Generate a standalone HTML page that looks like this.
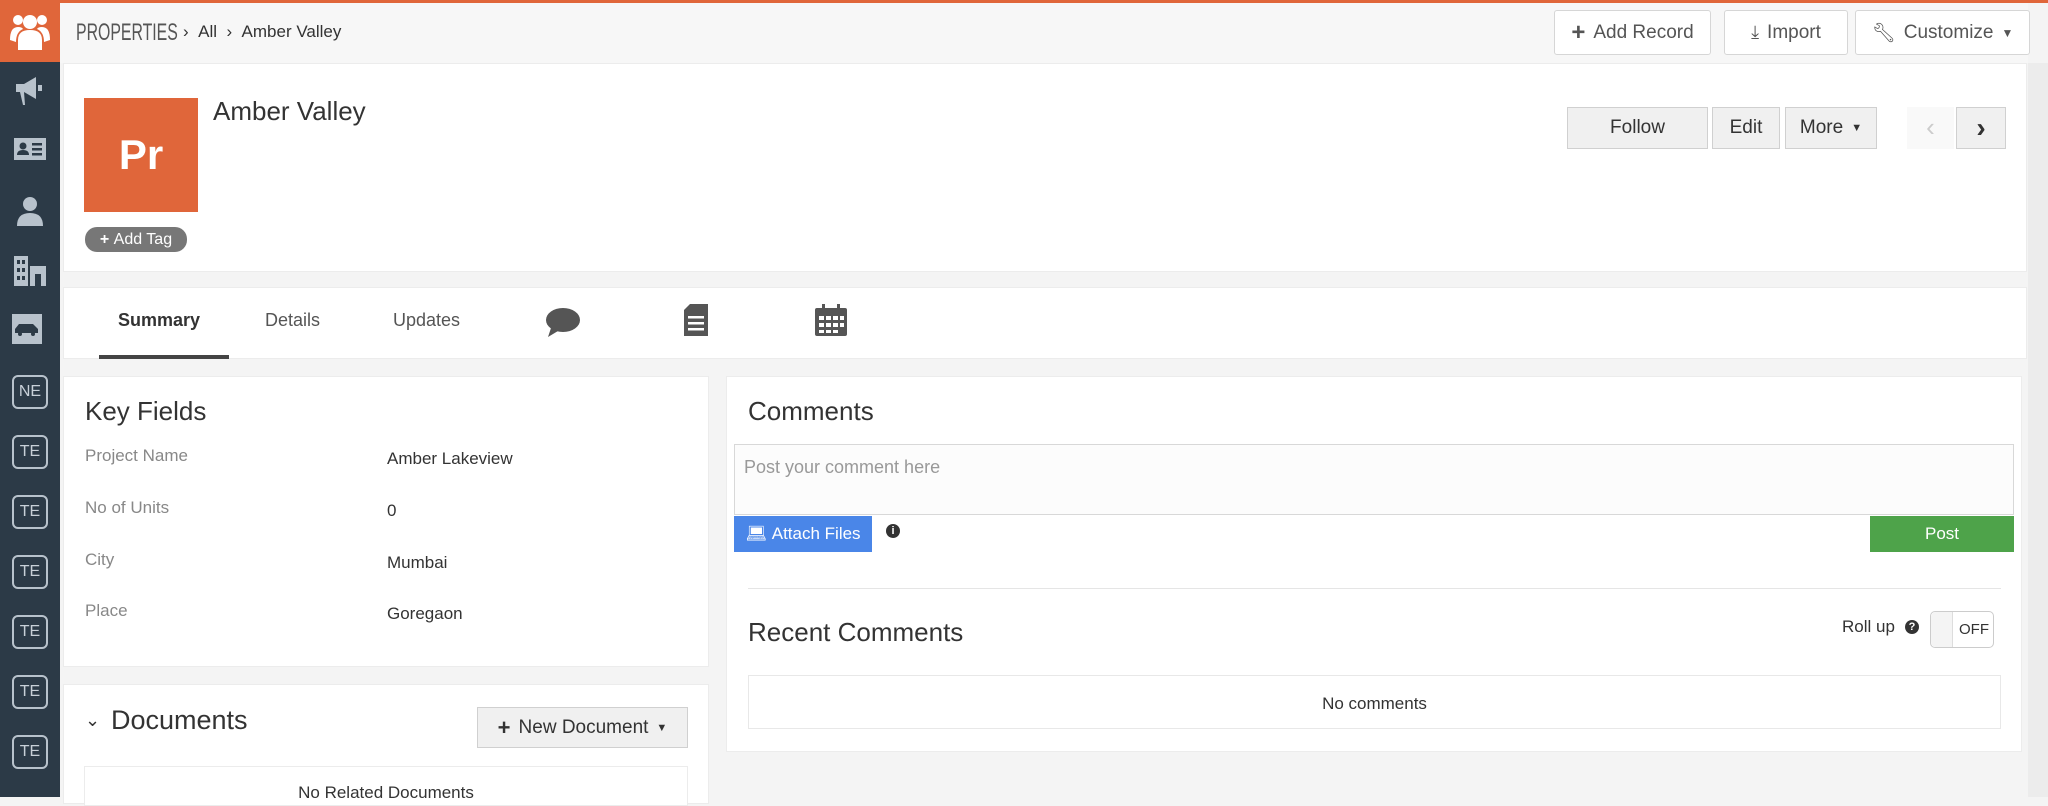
<!DOCTYPE html>
<html><head><meta charset="utf-8"><style>
*{box-sizing:border-box;margin:0;padding:0}
body{width:2048px;height:797px;overflow:hidden;background:#f4f4f4;font-family:"Liberation Sans",sans-serif;color:#333;position:relative}
.a{position:absolute}
.sb{left:0;top:0;width:60px;height:797px;background:#2c3a47}
.card{background:#fff;border:1px solid #ececec}
.btn{position:absolute;border:1px solid #d6d6d6;background:#fff;border-radius:3px;font-size:19px;color:#555;display:flex;align-items:center;justify-content:center;gap:8px}
.gbtn{position:absolute;border:1px solid #d0d0d0;background:#f0f0f0;font-size:19px;color:#333;display:flex;align-items:center;justify-content:center;gap:8px}
.box{position:absolute;left:12px;width:36px;height:34px;border:2px solid #b8c2cc;border-radius:6px;color:#c8d0d8;font-size:16px;display:flex;align-items:center;justify-content:center}
.lbl{position:absolute;left:85px;font-size:17px;color:#888}
.val{position:absolute;left:387px;font-size:17px;color:#333}
</style></head><body>
<div class="a" style="left:0;top:0;width:2048px;height:3px;background:#e0663a"></div>
<div class="a" style="left:60px;top:3px;width:1968px;height:60px;background:#f7f7f7"></div>
<div class="a" style="left:2028px;top:63px;width:20px;height:734px;background:#ececec"></div>
<div class="a sb">
 <div class="a" style="left:0;top:0;width:60px;height:62px;background:#e0663a"></div>
 <svg class="a" style="left:10px;top:12px" width="40" height="38" viewBox="0 0 40 38" fill="#fff"><circle cx="20" cy="10" r="7"/><circle cx="8" cy="8" r="5"/><circle cx="32" cy="8" r="5"/><path d="M8 38 V28 Q8 18 20 18 Q32 18 32 28 V38Z"/><path d="M0 28 Q0 15 8 15 Q12 15 13 17 Q6 20 6 30Z"/><path d="M40 28 Q40 15 32 15 Q28 15 27 17 Q34 20 34 30Z"/></svg>
 <svg class="a" style="left:14px;top:76px" width="32" height="30" viewBox="0 0 32 30" fill="#b8c2cc"><path d="M2 8h8l12-7v22l-12-7H2z"/><path d="M6 16l3 13h2l-1-13z"/><rect x="24" y="9" width="4" height="6"/></svg>
 <svg class="a" style="left:14px;top:138px" width="32" height="26" viewBox="0 0 32 26" fill="#b8c2cc"><path d="M0 0h32v22H0z"/><circle cx="9" cy="8" r="3.5" fill="#2c3a47"/><path d="M3 17q0-5 6-5t6 5z" fill="#2c3a47"/><rect x="18" y="5" width="10" height="2.5" fill="#2c3a47"/><rect x="18" y="10" width="10" height="2.5" fill="#2c3a47"/><rect x="18" y="15" width="10" height="2.5" fill="#2c3a47"/></svg>
 <svg class="a" style="left:15px;top:196px" width="30" height="30" viewBox="0 0 30 30" fill="#b8c2cc"><circle cx="15" cy="8" r="7"/><path d="M2 30q0-13 13-13t13 13z"/></svg>
 <svg class="a" style="left:14px;top:256px" width="32" height="30" viewBox="0 0 32 30" fill="#b8c2cc"><path d="M0 0h14v30H0z"/><path d="M16 10h16v20h-5V18h-6v12h-5z"/><g fill="#2c3a47"><rect x="3" y="4" width="3" height="4"/><rect x="8" y="4" width="3" height="4"/><rect x="3" y="12" width="3" height="4"/><rect x="8" y="12" width="3" height="4"/><rect x="3" y="20" width="3" height="4"/><rect x="8" y="20" width="3" height="4"/></g></svg>
 <div class="a" style="left:12px;top:314px;width:30px;height:30px;background:#b8c2cc"></div>
 <svg class="a" style="left:14px;top:322px" width="26" height="14" viewBox="0 0 26 14" fill="#2c3a47"><path d="M1 7l4-5h14l5 5v4H1z"/><circle cx="6" cy="12" r="2"/><circle cx="19" cy="12" r="2"/></svg>
 <div class="box" style="top:375px">NE</div>
 <div class="box" style="top:435px">TE</div>
 <div class="box" style="top:495px">TE</div>
 <div class="box" style="top:555px">TE</div>
 <div class="box" style="top:615px">TE</div>
 <div class="box" style="top:675px">TE</div>
 <div class="box" style="top:735px">TE</div>
</div>
<div class="a" style="left:76px;top:19px;font-size:24px;color:#555;transform:scaleX(.66);transform-origin:left;white-space:nowrap">PROPERTIES</div>
<div class="a" style="left:183px;top:22px;font-size:17px;color:#333;white-space:nowrap">›&nbsp;&nbsp;All&nbsp;&nbsp;›&nbsp;&nbsp;Amber Valley</div>
<div class="btn" style="left:1554px;top:10px;width:157px;height:45px"><b style="font-size:24px">+</b>Add Record</div>
<div class="btn" style="left:1724px;top:10px;width:124px;height:45px"><span style="font-size:18px">⤓</span>Import</div>
<div class="btn" style="left:1855px;top:10px;width:175px;height:45px"><span>🔧︎</span>Customize <span style="font-size:12px">▼</span></div>
<div class="a card" style="left:63px;top:63px;width:1964px;height:209px"></div>
<div class="a" style="left:84px;top:98px;width:114px;height:114px;background:#e0663a;color:#fff;font-size:42px;font-weight:bold;display:flex;align-items:center;justify-content:center">Pr</div>
<div class="a" style="left:213px;top:96px;font-size:26px;color:#333">Amber Valley</div>
<div class="a" style="left:85px;top:227px;width:102px;height:25px;background:#777;border-radius:12px;color:#fff;font-size:16px;display:flex;align-items:center;justify-content:center"><b>+</b>&nbsp;Add Tag</div>
<div class="gbtn" style="left:1567px;top:107px;width:141px;height:42px">Follow</div>
<div class="gbtn" style="left:1712px;top:107px;width:68px;height:42px">Edit</div>
<div class="gbtn" style="left:1785px;top:107px;width:92px;height:42px">More <span style="font-size:11px">▼</span></div>
<div class="a" style="left:1907px;top:107px;width:47px;height:42px;background:#f9f9f9;color:#ccc;font-size:26px;text-align:center;line-height:40px">‹</div>
<div class="gbtn" style="left:1956px;top:107px;width:50px;height:42px;font-size:28px;font-weight:bold">›</div>
<div class="a card" style="left:63px;top:287px;width:1964px;height:72px"></div>
<div class="a" style="left:118px;top:310px;font-size:18px;font-weight:bold;color:#333">Summary</div>
<div class="a" style="left:99px;top:355px;width:130px;height:4px;background:#444"></div>
<div class="a" style="left:265px;top:310px;font-size:18px;color:#555">Details</div>
<div class="a" style="left:393px;top:310px;font-size:18px;color:#555">Updates</div>
<svg class="a" style="left:545px;top:308px" width="36" height="30" viewBox="0 0 36 30" fill="#555"><ellipse cx="18" cy="12" rx="17" ry="12"/><path d="M6 20l-3 9 10-6z"/></svg>
<svg class="a" style="left:684px;top:304px" width="24" height="32" viewBox="0 0 24 32" fill="#555"><path d="M6 0h18v32H0V6z"/><g fill="#fff"><rect x="4" y="12" width="16" height="2.5"/><rect x="4" y="18" width="16" height="2.5"/><rect x="4" y="24" width="16" height="2.5"/></g></svg>
<svg class="a" style="left:815px;top:304px" width="32" height="32" viewBox="0 0 32 32" fill="#555"><rect x="0" y="4" width="32" height="28" rx="2"/><rect x="7" y="0" width="3" height="7"/><rect x="22" y="0" width="3" height="7"/><g fill="#fff"><rect x="4" y="12" width="5" height="4"/><rect x="11" y="12" width="5" height="4"/><rect x="18" y="12" width="5" height="4"/><rect x="25" y="12" width="4" height="4"/><rect x="4" y="19" width="5" height="4"/><rect x="11" y="19" width="5" height="4"/><rect x="18" y="19" width="5" height="4"/><rect x="25" y="19" width="4" height="4"/><rect x="4" y="26" width="5" height="3"/><rect x="11" y="26" width="5" height="3"/><rect x="18" y="26" width="5" height="3"/></g></svg>
<div class="a card" style="left:63px;top:376px;width:646px;height:291px"></div>
<div class="a" style="left:85px;top:396px;font-size:26px;color:#333">Key Fields</div>
<div class="lbl" style="top:446px">Project Name</div><div class="val" style="top:449px">Amber Lakeview</div>
<div class="lbl" style="top:498px">No of Units</div><div class="val" style="top:501px">0</div>
<div class="lbl" style="top:550px">City</div><div class="val" style="top:553px">Mumbai</div>
<div class="lbl" style="top:601px">Place</div><div class="val" style="top:604px">Goregaon</div>
<div class="a card" style="left:63px;top:684px;width:646px;height:120px"></div>
<div class="a" style="left:85px;top:710px;font-size:18px;color:#333">⌄</div>
<div class="a" style="left:111px;top:705px;font-size:27px;color:#333">Documents</div>
<div class="gbtn" style="left:477px;top:707px;width:211px;height:41px;font-size:19px"><b style="font-size:22px">+</b>New Document <span style="font-size:11px">▼</span></div>
<div class="a" style="left:84px;top:766px;width:604px;height:40px;border:1px solid #ececec;background:#fff;text-align:center;font-size:17px;padding-top:16px">No Related Documents</div>
<div class="a card" style="left:726px;top:376px;width:1296px;height:376px"></div>
<div class="a" style="left:748px;top:396px;font-size:26px;color:#333">Comments</div>
<div class="a" style="left:734px;top:444px;width:1280px;height:71px;border:1px solid #d8d8d8;background:#fcfcfc;font-size:18px;color:#999;padding:12px 9px">Post your comment here</div>
<div class="a" style="left:734px;top:516px;width:138px;height:36px;background:#4a86e8;color:#fff;font-size:17px;display:flex;align-items:center;justify-content:center">💻︎&nbsp;Attach Files</div>
<div class="a" style="left:886px;top:524px;width:14px;height:14px;border-radius:7px;background:#333;color:#fff;font-size:11px;font-weight:bold;text-align:center;line-height:14px">i</div>
<div class="a" style="left:1870px;top:516px;width:144px;height:36px;background:#4ea34a;color:#fff;font-size:17px;display:flex;align-items:center;justify-content:center">Post</div>
<div class="a" style="left:748px;top:588px;width:1253px;height:1px;background:#e5e5e5"></div>
<div class="a" style="left:748px;top:617px;font-size:26px;color:#333">Recent Comments</div>
<div class="a" style="left:1842px;top:617px;font-size:17px;color:#333">Roll up</div>
<div class="a" style="left:1905px;top:620px;width:14px;height:14px;border-radius:7px;background:#333;color:#fff;font-size:11px;font-weight:bold;text-align:center;line-height:14px">?</div>
<div class="a" style="left:1930px;top:611px;width:64px;height:37px;border:1px solid #ccc;border-radius:5px;background:#fff;font-size:15px;padding:9px 0 0 28px">OFF</div>
<div class="a" style="left:1931px;top:612px;width:22px;height:35px;border-right:1px solid #ddd;background:#f4f4f4;border-radius:5px 0 0 5px"></div>
<div class="a" style="left:748px;top:675px;width:1253px;height:54px;border:1px solid #e8e8e8;text-align:center;font-size:17px;padding-top:18px;color:#333">No comments</div>
</body></html>
